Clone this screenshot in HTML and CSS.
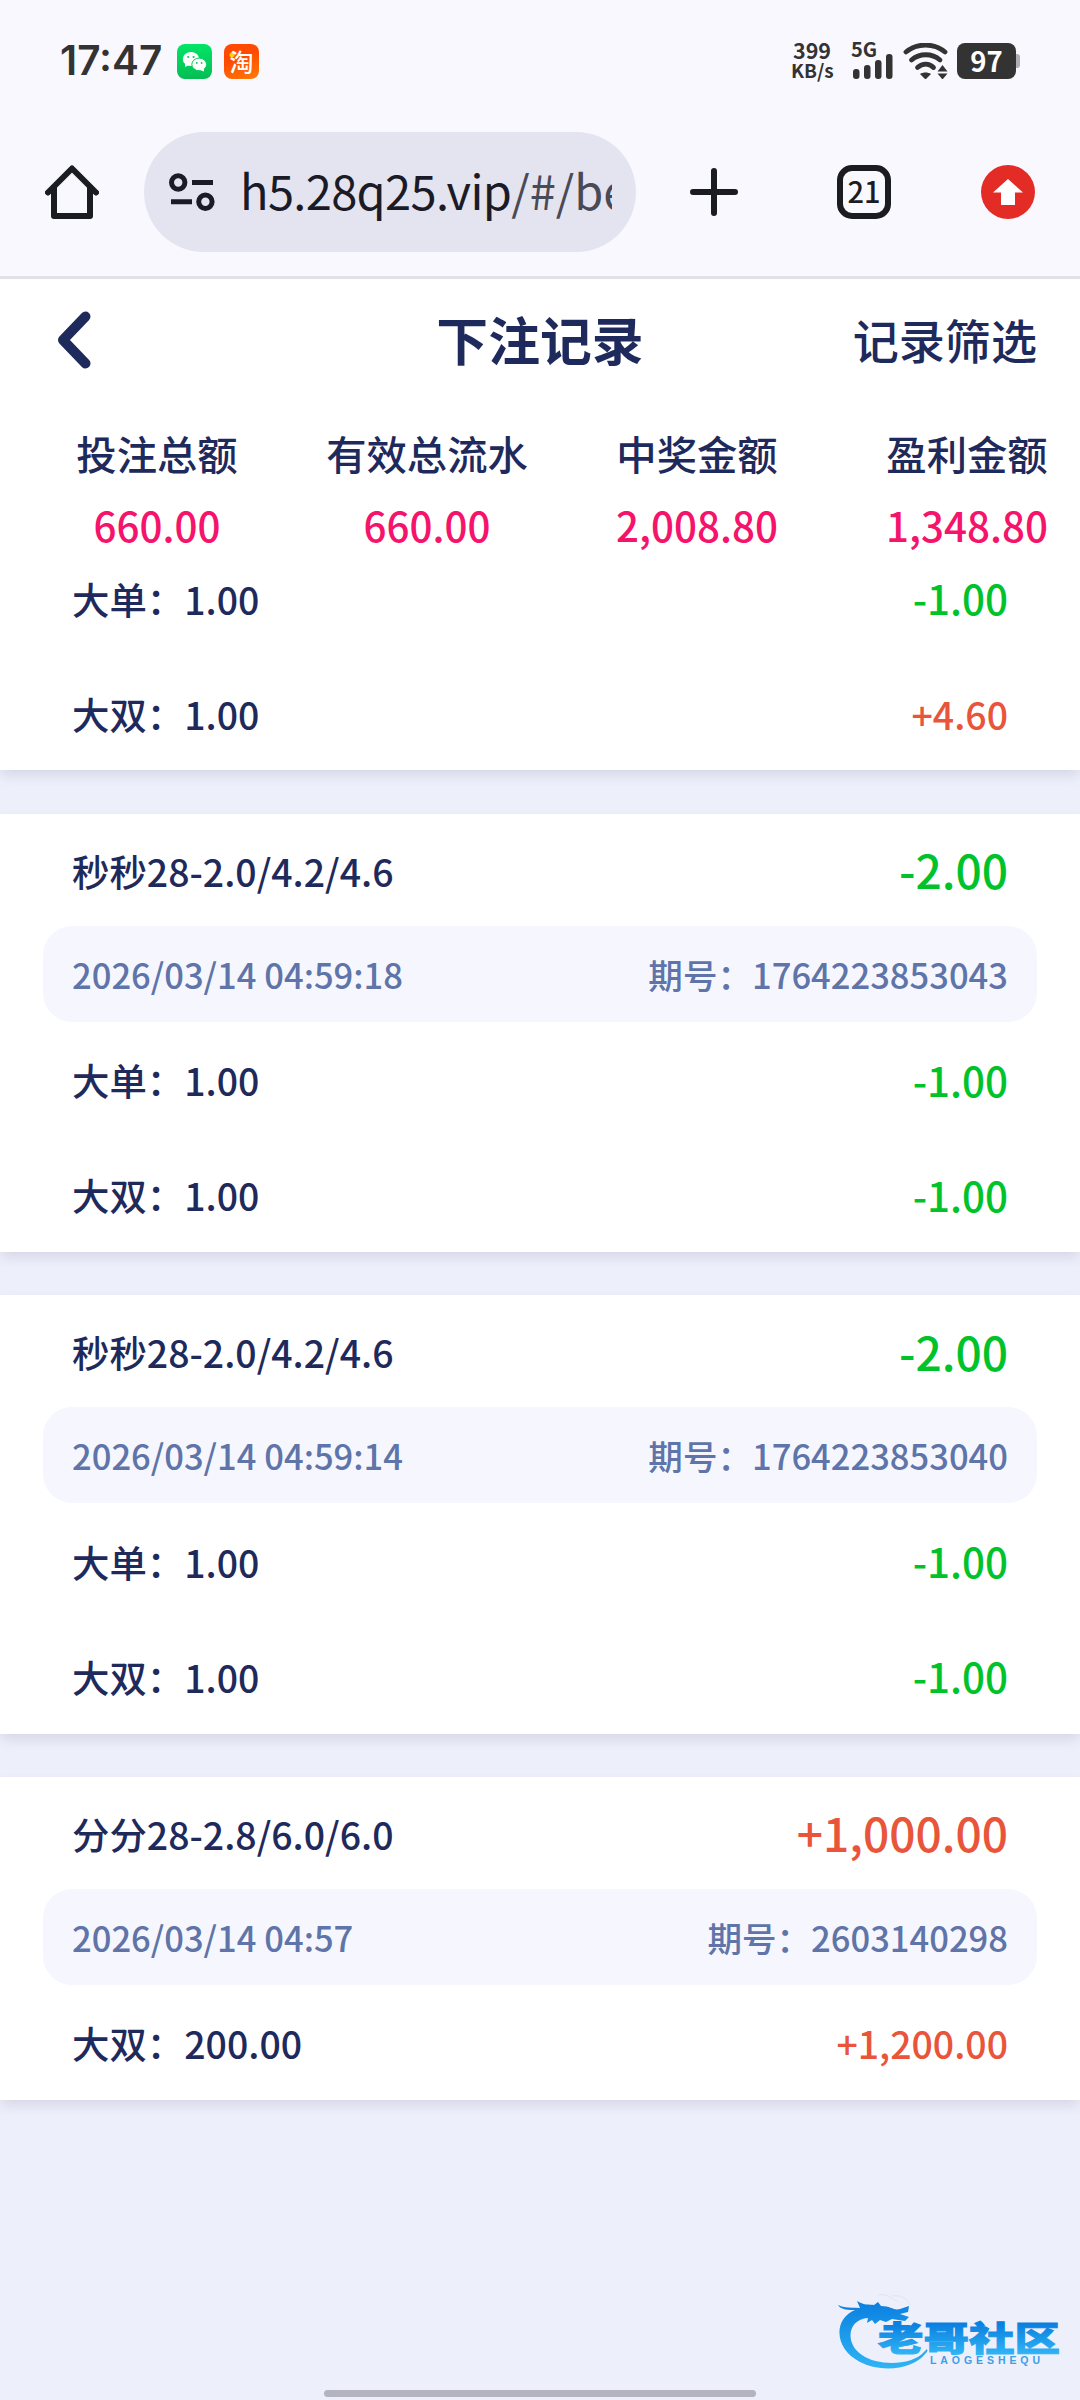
FILE: index.html
```html
<!DOCTYPE html>
<html lang="zh-CN">
<head>
<meta charset="utf-8">
<title>下注记录</title>
<link rel="stylesheet" href="styles.css">
</head>
<body>
<div class="statusbar">
  <span class="clock">17:47</span>
  <svg class="app" viewBox="0 0 35 35">
    <defs><linearGradient id="wx" x1="0" y1="0" x2="0" y2="1"><stop offset="0" stop-color="#02e567"/><stop offset="1" stop-color="#05bd53"/></linearGradient></defs>
    <rect width="35" height="35" rx="8" fill="url(#wx)"/>
    <ellipse cx="14" cy="15" rx="8.2" ry="7" fill="#fff"/><path d="M8 19v4l4-2z" fill="#fff"/>
    <ellipse cx="22.2" cy="20.4" rx="7.4" ry="6.3" fill="#fff" stroke="#03d05d" stroke-width="1"/><path d="M23 26l4 1.600v-3.600z" fill="#fff"/>
    <g fill="#03d05d"><circle cx="11.200" cy="13" r="1.100"/><circle cx="16.600" cy="13" r="1.100"/><circle cx="19.800" cy="19" r=".9"/><circle cx="24.600" cy="19" r=".9"/></g>
  </svg>
  <span class="app taobao">淘</span>
  <div class="speed"><span>399</span><span class="unit">KB/s</span></div>
  <div class="cell"><span>5G</span>
    <svg viewBox="0 0 40 25"><g fill="#333"><rect x="0" y="15" width="6.500" height="10" rx="3"/><rect x="11" y="11" width="6.500" height="14" rx="3"/><rect x="22" y="6" width="6.500" height="19" rx="3"/><rect x="33" y="0" width="6.500" height="25" rx="3"/></g></svg>
  </div>
  <svg class="wifi" viewBox="0 0 46 36">
    <g fill="none" stroke="#333" stroke-width="4.800" stroke-linecap="round"><path d="M3 9C14-.3 31-.3 42 9"/><path d="M8.500 17c8-7 20.500-7 28.500 0"/><path d="M14.500 24.500c5-4.500 11.500-4.500 16 0"/></g>
    <path d="M17 31c3-2 8-2 11 0l-5.500 5.500z" fill="#333"/><path d="M34.500 28.500l5-6.500 5 6.500zM34.500 30.500h10l-5 6z" fill="#333"/>
  </svg>
  <div class="battery">97</div>
</div>
<div class="browser">
  <svg class="home" viewBox="0 0 54 54" fill="none" stroke="#1b1b22" stroke-width="6" stroke-linecap="round" stroke-linejoin="round"><path d="M3 27.500L27 3.500l24 24"/><path d="M9 23v28h36V23"/></svg>
  <div class="address">
    <svg class="tune" viewBox="0 0 46 38" fill="none" stroke="#1b1b28" stroke-width="5"><circle cx="9.200" cy="9.500" r="6.700"/><path d="M23 9.500h21M2 28.700h21"/><circle cx="36.400" cy="28.700" r="6.700"/></svg>
    <div class="url">h5.28q25.vip<span>/#/be</span></div>
  </div>
  <svg class="plus" viewBox="0 0 48 48" stroke="#1b1b22" stroke-width="6" stroke-linecap="round"><path d="M24 3v42M3 24h42"/></svg>
  <div class="tabs">21</div>
  <svg class="update" viewBox="0 0 54 54"><circle cx="27" cy="27" r="27" fill="#e32c25"/><path d="M27 14l15 13.500h-8V40H20V27.500h-8z" fill="#fff"/></svg>
</div>

<header class="topbar">
  <svg class="back" viewBox="0 0 34 58" fill="none" stroke="#1f2a5c" stroke-width="10" stroke-linecap="round" stroke-linejoin="round"><path d="M28.500 5.500L6 29l22.500 23.500"/></svg>
  <h1>下注记录</h1>
  <span class="filter">记录筛选</span>
</header>
<section class="totals">
  <div><span>投注总额</span><b>660.00</b></div>
  <div><span>有效总流水</span><b>660.00</b></div>
  <div><span>中奖金额</span><b>2,008.80</b></div>
  <div><span>盈利金额</span><b>1,348.80</b></div>
</section>

<main class="list">
  <article class="card">
    <div class="row"><span>大单：1.00</span><span class="lose">-1.00</span></div>
    <div class="row"><span>大双：1.00</span><span class="win">+4.60</span></div>
  </article>
  <article class="card">
    <div class="head"><span>秒秒28-2.0/4.2/4.6</span><span class="sum lose">-2.00</span></div>
    <div class="meta"><span>2026/03/14 04:59:18</span><span>期号：1764223853043</span></div>
    <div class="row"><span>大单：1.00</span><span class="lose">-1.00</span></div>
    <div class="row"><span>大双：1.00</span><span class="lose">-1.00</span></div>
  </article>
  <article class="card">
    <div class="head"><span>秒秒28-2.0/4.2/4.6</span><span class="sum lose">-2.00</span></div>
    <div class="meta"><span>2026/03/14 04:59:14</span><span>期号：1764223853040</span></div>
    <div class="row"><span>大单：1.00</span><span class="lose">-1.00</span></div>
    <div class="row"><span>大双：1.00</span><span class="lose">-1.00</span></div>
  </article>
  <article class="card">
    <div class="head"><span>分分28-2.8/6.0/6.0</span><span class="sum win">+1,000.00</span></div>
    <div class="meta"><span>2026/03/14 04:57</span><span>期号：2603140298</span></div>
    <div class="row"><span>大双：200.00</span><span class="win">+1,200.00</span></div>
  </article>
</main>

<div class="watermark">
  <svg viewBox="0 0 224 80">
    <defs><linearGradient id="wm" x1="0" y1="0" x2="0" y2="1"><stop offset="0" stop-color="#0a7fe0"/><stop offset="1" stop-color="#2fb4f4"/></linearGradient>
    <linearGradient id="wt" gradientUnits="userSpaceOnUse" x1="0" y1="32" x2="0" y2="62"><stop offset="0" stop-color="#0a80e0"/><stop offset="1" stop-color="#2fb4f4"/></linearGradient></defs>
    <path fill="url(#wm)" d="M0 13c8 4 14 2 22 3l-3-7c8 5 12 3 17 4l4-3 3 4c10 0 13 5 19 3l9-3-1 6-8 2 9 3-4 4-13-2-6 3-6-2-5 4-3-4-5 3 1-5C10 27 6 51 24 63c17 12 51 10 62-3l3-3c1 2 0 3-2 5C76 76 46 82 22 70-4 57-5 27 17 18 11 18 3 18 0 13z"/>
    <path fill="none" stroke="#dbe6f9" stroke-width="1" d="M40 3c9-2 13 4 19 6M54 4c10-2 16 4 18 9"/>
    <text class="brand" x="40" y="59" textLength="182" lengthAdjust="spacingAndGlyphs" fill="url(#wt)" stroke="url(#wt)">老哥社区</text>
    <text class="latin" x="92" y="72" textLength="110" fill="#3c9fe8">LAOGESHEQU</text>
  </svg>
</div>
<div class="gesture"></div>
</body>
</html>
```
FILE: styles.css
```css
* { box-sizing: border-box; }
body {
  margin: 0;
  width: 1080px;
  height: 2400px;
  position: relative;
  overflow: hidden;
  display: flex;
  flex-direction: column;
  background: #edeffb;
  color: #1f2a5c;
  font-family: "Noto Sans CJK SC", sans-serif;
  font-weight: 500;
}
svg { display: block; flex: none; }

.statusbar {
  height: 122px;
  padding: 0 64px 0 60px;
  background: #f9f8ff;
  color: #333;
  display: flex;
  align-items: center;
}
.clock { width: 117px; font: 600 40.5px/1 Inter, sans-serif; }
.app { width: 35px; height: 35px; margin-right: 12px; }
.taobao {
  border-radius: 8px;
  background: radial-gradient(circle at 8px 11px, #ffd400 2px, transparent 3px), linear-gradient(160deg, #ff4a00 40%, #ff7c0a);
  color: #fff;
  font-size: 24px;
  line-height: 34px;
  text-align: center;
}
.speed {
  margin-left: auto;
  width: 60px;
  display: flex;
  flex-direction: column;
  font: 700 21.5px/20px "Noto Sans CJK SC", sans-serif;
  padding-bottom: 3px;
}
.speed span:first-child { padding-left: 2px; }
.speed .unit { font-size: 19px; line-height: 19px; }
.cell { width: 52px; height: 36px; font: 700 20px/12px "Noto Sans CJK SC", sans-serif; position: relative; }
.cell svg { position: absolute; left: 2px; bottom: 0; width: 40px; height: 25px; }
.wifi { width: 46px; height: 36px; margin-right: 8px; }
.battery {
  width: 59px;
  height: 36px;
  border-radius: 8px;
  background: #333;
  color: #fff;
  font: 700 27.5px/34px "Noto Sans CJK SC", sans-serif;
  text-align: center;
  position: relative;
}
.battery::after { content: ""; position: absolute; left: 59px; top: 11px; width: 4px; height: 14px; border-radius: 0 3px 3px 0; background: #b0aeb5; }

.browser {
  height: 157px;
  padding: 10px 45px 0;
  background: #f9f8ff;
  border-bottom: 3px solid #e1e1ea;
  display: flex;
  align-items: flex-start;
}
.browser > svg, .tabs { margin-top: 33px; }
.home { width: 54px; height: 54px; margin-right: 45px; }
.address {
  width: 492px;
  height: 120px;
  border-radius: 60px;
  padding: 0 24px 0 25px;
  background: #e4e4f0;
  display: flex;
  align-items: center;
}
.tune { width: 46px; height: 38px; margin-right: 25px; }
.url { flex: 1; margin-bottom: 4px; overflow: hidden; white-space: nowrap; color: #1b1b28; font: 400 47px/64px "Noto Sans CJK SC", sans-serif; letter-spacing: -.65px; }
.url span { color: #4a4a57; letter-spacing: 0; }
.browser > .plus { width: 48px; height: 48px; margin: 36px 99px 0 54px; }
.tabs {
  width: 54px;
  height: 54px;
  margin-right: 90px;
  border: 6px solid #1b1b22;
  border-radius: 15px;
  color: #1b1b22;
  font: 500 29px/38px "Noto Sans CJK SC", sans-serif;
  text-align: center;
}
.update { width: 54px; height: 54px; }

.topbar {
  height: 127px;
  padding: 0 43px 0 57px;
  background: #fff;
  display: grid;
  grid-template-columns: 1fr auto 1fr;
  align-items: center;
}
.topbar, .totals { flex: none; }
.back { width: 34px; height: 58px; margin-bottom: 6px; }
.topbar h1 { margin: 0 0 8px -14px; font-size: 51.84px; line-height: 76px; font-weight: 700; }
.filter { justify-self: end; margin-bottom: 8px; font-size: 46.08px; line-height: 68px; }
.totals {
  height: 134px;
  padding: 11px 0 0 22px;
  background: #fff;
  position: relative;
  z-index: 1;
  display: grid;
  grid-template-columns: repeat(4, 270px);
}
.totals div { display: flex; flex-direction: column; align-items: center; font-size: 40.32px; line-height: 72px; }
.totals b { font-weight: 500; color: #f5136b; }

.list { display: flex; flex-direction: column; gap: 43.2px; }
.card { background: #fff; box-shadow: 0 6px 12px -1px rgba(50, 40, 80, .12); padding: 0 43px; }
.head, .meta, .row { display: flex; justify-content: space-between; align-items: center; padding: 0 29px; font-size: 37.44px; }
.head { height: 112px; padding-top: 2px; }
.meta { height: 96px; border-radius: 29px; background: #f6f7fe; color: #5f74a8; font-size: 34.56px; }
.row { height: 115.2px; padding-top: 2px; }
.sum { font-size: 46.08px; margin-bottom: 3px; }
.lose { color: #00c32b; }
.row .lose { font-size: 40.32px; margin-bottom: 2px; }
.win { color: #e8553a; }

.watermark { position: absolute; left: 838px; top: 2292px; width: 224px; height: 80px; }
.watermark svg { width: 224px; height: 80px; }
.brand { font: 900 34px "Noto Sans CJK SC", sans-serif; stroke-width: 1px; }
.latin { font: 700 10.5px "Liberation Sans", sans-serif; }
.gesture { position: absolute; left: 324px; top: 2390px; width: 432px; height: 7px; border-radius: 4px; background: #b4b4c0; }
```
